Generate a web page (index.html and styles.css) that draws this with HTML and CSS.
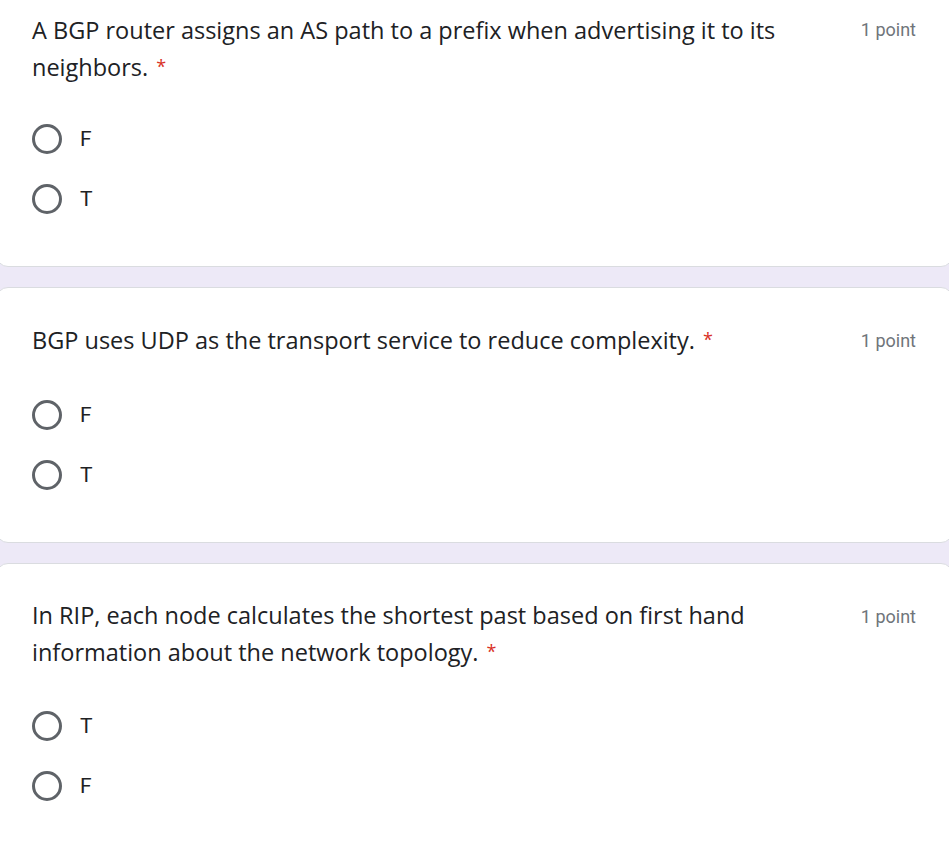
FILE: index.html
```html
<!DOCTYPE html>
<html lang="en">
<head>
<meta charset="utf-8">
<title>Quiz</title>
<link rel="stylesheet" href="styles.css">
</head>
<body>
<main class="form">
  <section class="card first">
    <div class="head">
      <div class="title">A BGP router assigns an AS path to a prefix when advertising it to its neighbors.<span class="req">*</span></div>
      <div class="points">1 point</div>
    </div>
    <div class="options">
      <label class="opt"><span class="radio"></span><span class="lbl">F</span></label>
      <label class="opt"><span class="radio"></span><span class="lbl">T</span></label>
    </div>
  </section>
  <section class="card">
    <div class="head">
      <div class="title">BGP uses UDP as the transport service to reduce complexity.<span class="req">*</span></div>
      <div class="points">1 point</div>
    </div>
    <div class="options">
      <label class="opt"><span class="radio"></span><span class="lbl">F</span></label>
      <label class="opt"><span class="radio"></span><span class="lbl">T</span></label>
    </div>
  </section>
  <section class="card">
    <div class="head">
      <div class="title">In RIP, each node calculates the shortest past based on first hand information about the network topology.<span class="req">*</span></div>
      <div class="points">1 point</div>
    </div>
    <div class="options">
      <label class="opt"><span class="radio"></span><span class="lbl">T</span></label>
      <label class="opt"><span class="radio"></span><span class="lbl">F</span></label>
    </div>
  </section>
</main>
</body>
</html>
```
FILE: styles.css
```css
html, body {
  margin: 0;
  padding: 0;
  background: #ede9f7;
  overflow: hidden;
}
body {
  font-family: "Open Sans", "Liberation Sans", sans-serif;
  color: #202124;
}
.form {
  display: flex;
  flex-direction: column;
  gap: 20px;
  margin: -24px -4px 0 -4px;
}
.card {
  background: #fff;
  border: 1px solid #dadce0;
  border-radius: 12px;
  padding: 35px 36px 37px 35px;
}
.head {
  display: flex;
  align-items: flex-start;
}
.title {
  flex: 1;
  font-size: 23.5px;
  line-height: 36px;
  margin-top: -2px;
  padding-right: 40px;
}
.first .title {
  margin-top: 0;
}
.first .options {
  margin-top: 24px;
}
.req {
  color: #d93025;
  font-size: 18px;
  vertical-align: 3px;
  margin-left: 8px;
}
.points {
  font-family: Roboto, "Liberation Sans", sans-serif;
  font-size: 18px;
  line-height: 36px;
  color: #70757a;
  white-space: nowrap;
}
.options {
  margin-top: 26px;
  display: flex;
  flex-direction: column;
}
.opt {
  height: 60px;
  display: flex;
  align-items: center;
}
.radio {
  width: 30px;
  height: 30px;
  box-sizing: border-box;
  border: 3px solid #5f6368;
  border-radius: 50%;
  flex: none;
}
.lbl {
  margin-left: 18px;
  font-family: Roboto, "Liberation Sans", sans-serif;
  font-size: 21px;
  color: #202124;
}
```
